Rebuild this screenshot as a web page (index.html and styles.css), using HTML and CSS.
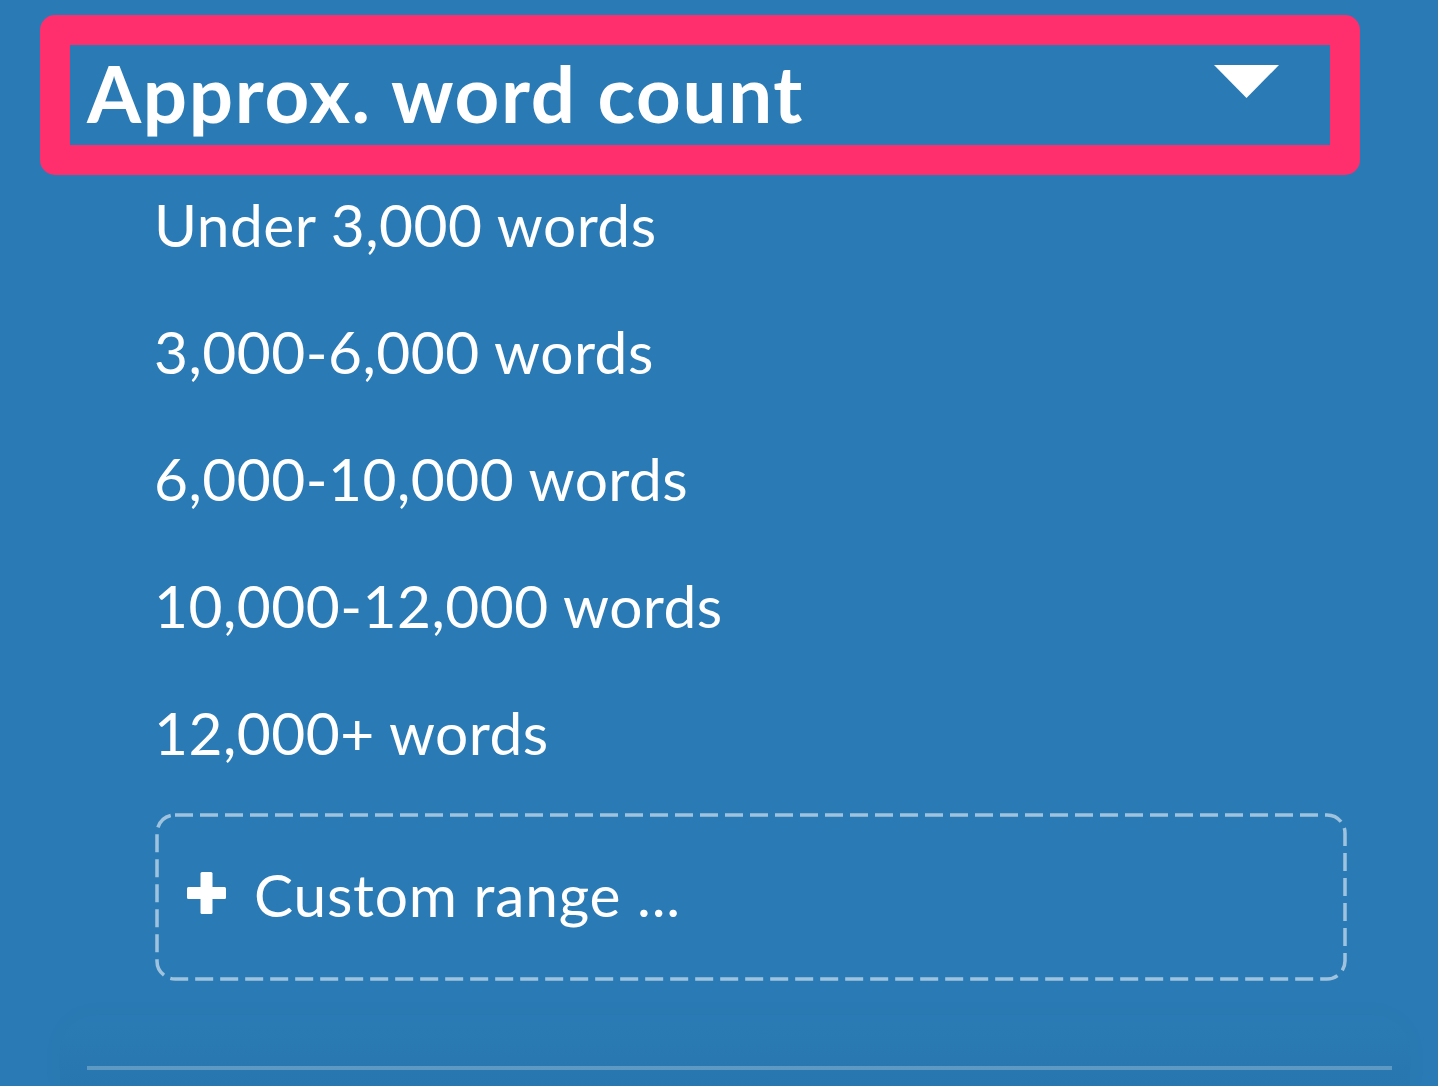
FILE: index.html
```html
<!DOCTYPE html>
<html lang="en">
<head>
<meta charset="utf-8">
<title>Approx. word count</title>
<link rel="stylesheet" href="styles.css">
</head>
<body>
<div class="panel">
  <div class="filter-head">
    <span class="filter-title">Approx. word count</span>
    <svg class="caret" width="65" height="33" viewBox="0 0 65 33" aria-hidden="true"><polygon points="0,0 65,0 32.5,33" fill="#fff"/></svg>
  </div>
  <ul class="options">
    <li class="option">Under 3,000 words</li>
    <li class="option">3,000-6,000 words</li>
    <li class="option">6,000-10,000 words</li>
    <li class="option">10,000-12,000 words</li>
    <li class="option">12,000+ words</li>
  </ul>
  <div class="custom">
    <svg class="dash" width="1192" height="168" viewBox="0 0 1192 168" aria-hidden="true"><rect x="2" y="2" width="1188" height="164" rx="18" ry="18" fill="none" stroke="rgba(255,255,255,0.55)" stroke-width="3.5" stroke-dasharray="18 7"/></svg>
    <svg class="plus" width="39" height="42" viewBox="0 0 39 42" aria-hidden="true"><rect x="13.5" y="0" width="12" height="42" rx="1.5" fill="#fff"/><rect x="0" y="15" width="39" height="12" rx="1.5" fill="#fff"/></svg>
    <span class="custom-label">Custom range ...</span>
  </div>
  <div class="footer">
    <div class="rule"></div>
  </div>
</div>
</body>
</html>
```

FILE: styles.css
```css
html, body {
  margin: 0;
  padding: 0;
  background: #2a7bb5;
  height: 1086px;
  overflow: hidden;
}
body {
  font-family: Lato, "Open Sans", "Liberation Sans", sans-serif;
  color: #fff;
}
.panel {
  padding-top: 15px;
}
.filter-head {
  box-sizing: border-box;
  margin-left: 40px;
  width: 1320px;
  height: 160px;
  border: 30px solid #ff2e6c;
  border-radius: 15px;
  padding: 0 51px 0 17px;
  display: flex;
  align-items: center;
  justify-content: space-between;
}
.filter-title {
  font-weight: 700;
  font-size: 78px;
  line-height: 100px;
  letter-spacing: 1.7px;
  margin-top: -4px;
}
.caret {
  display: block;
  margin-top: -28px;
}
.options {
  list-style: none;
  margin: 14px 0 0 0;
  padding: 0 0 0 154px;
  display: flex;
  flex-direction: column;
  gap: 57px;
}
.option {
  font-size: 58.6px;
  line-height: 70px;
  height: 70px;
  letter-spacing: 0.5px;
}
.custom {
  position: relative;
  box-sizing: border-box;
  margin: 46px 0 0 155px;
  width: 1192px;
  height: 168px;
  padding: 46px 0 0 32px;
  display: flex;
  align-items: flex-start;
  gap: 28px;
}
.dash {
  position: absolute;
  left: 0;
  top: 0;
}
.plus {
  display: block;
  margin-top: 13px;
}
.custom-label {
  font-size: 58.6px;
  line-height: 70px;
  letter-spacing: 0.8px;
}
.footer {
  margin: 34px 28px 0 60px;
  height: 71px;
  border-radius: 36px 36px 0 0;
  background: linear-gradient(to bottom, rgba(20, 60, 110, 0) 0%, rgba(20, 60, 110, 0.08) 100%);
  box-shadow: 0 0 18px rgba(20, 60, 110, 0.06);
  padding: 51px 18px 0 27px;
  box-sizing: border-box;
}
.rule {
  height: 4px;
  background: rgba(255, 255, 255, 0.25);
}
```
